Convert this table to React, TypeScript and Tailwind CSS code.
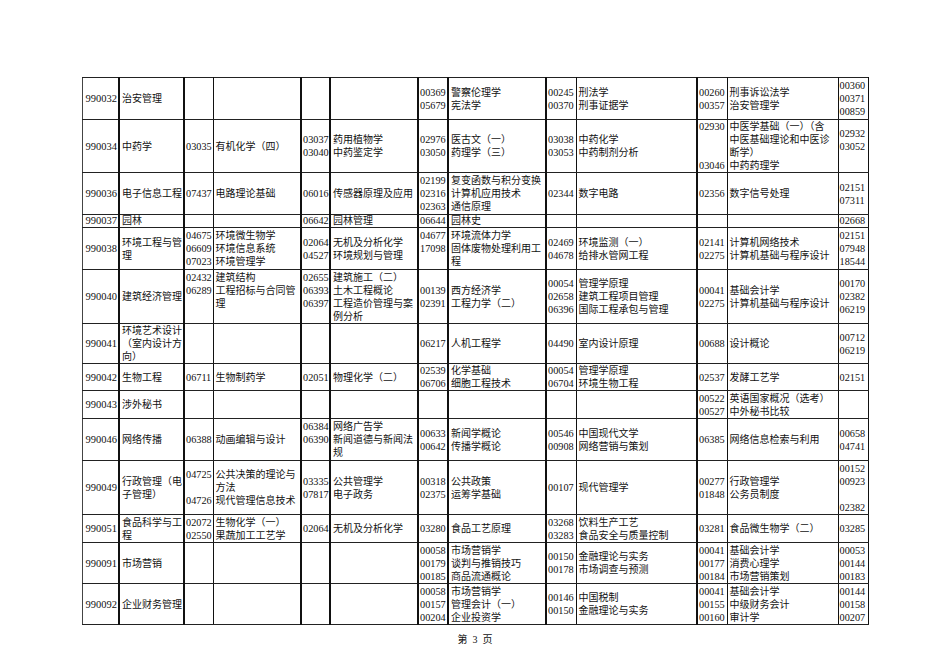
import React from 'react';

type Lines = string[];
type Pair = [Lines, Lines];
type Row = { h: number; id: string; name: Lines; pairs: Pair[]; last: Lines };

const E: Pair = [[], []];

const rows: Row[] = [
  {
    h: 42, id: '990032', name: ['治安管理'],
    pairs: [E, E,
      [['00369', '05679'], ['警察伦理学', '宪法学']],
      [['00245', '00370'], ['刑法学', '刑事证据学']],
      [['00260', '00357'], ['刑事诉讼法学', '治安管理学']]],
    last: ['00360', '00371', '00859'],
  },
  {
    h: 53, id: '990034', name: ['中药学'],
    pairs: [
      [['03035'], ['有机化学（四）']],
      [['03037', '03040'], ['药用植物学', '中药鉴定学']],
      [['02976', '03050'], ['医古文（一）', '药理学（三）']],
      [['03038', '03053'], ['中药化学', '中药制剂分析']],
      [['02930', '', '', '03046'], ['中医学基础（一）（含', '中医基础理论和中医诊', '断学）', '中药药理学']]],
    last: ['02932', '03052', ''],
  },
  {
    h: 42, id: '990036', name: ['电子信息工程'],
    pairs: [
      [['07437'], ['电路理论基础']],
      [['06016'], ['传感器原理及应用']],
      [['02199', '02316', '02363'], ['复变函数与积分变换', '计算机应用技术', '通信原理']],
      [['02344'], ['数字电路']],
      [['02356'], ['数字信号处理']]],
    last: ['02151', '07311'],
  },
  {
    h: 13, id: '990037', name: ['园林'],
    pairs: [E,
      [['06642'], ['园林管理']],
      [['06644'], ['园林史']],
      E, E],
    last: ['02668'],
  },
  {
    h: 42, id: '990038', name: ['环境工程与管', '理'],
    pairs: [
      [['04675', '06609', '07023'], ['环境微生物学', '环境信息系统', '环境管理学']],
      [['02064', '04527'], ['无机及分析化学', '环境规划与管理']],
      [['04677', '17098', ''], ['环境流体力学', '固体废物处理利用工', '程']],
      [['02469', '04678'], ['环境监测（一）', '给排水管网工程']],
      [['02141', '02275'], ['计算机网络技术', '计算机基础与程序设计']]],
    last: ['02151', '07948', '18544'],
  },
  {
    h: 54, id: '990040', name: ['建筑经济管理'],
    pairs: [
      [['02432', '06289', '', ''], ['建筑结构', '工程招标与合同管', '理', '']],
      [['02655', '06393', '06397', ''], ['建筑施工（二）', '土木工程概论', '工程造价管理与案', '例分析']],
      [['00139', '02391'], ['西方经济学', '工程力学（二）']],
      [['00054', '02658', '06396'], ['管理学原理', '建筑工程项目管理', '国际工程承包与管理']],
      [['00041', '02275'], ['基础会计学', '计算机基础与程序设计']]],
    last: ['00170', '02382', '06219'],
  },
  {
    h: 39, id: '990041', name: ['环境艺术设计', '（室内设计方', '向）'],
    pairs: [E, E,
      [['06217'], ['人机工程学']],
      [['04490'], ['室内设计原理']],
      [['00688'], ['设计概论']]],
    last: ['00712', '06219'],
  },
  {
    h: 26, id: '990042', name: ['生物工程'],
    pairs: [
      [['06711'], ['生物制药学']],
      [['02051'], ['物理化学（二）']],
      [['02539', '06706'], ['化学基础', '细胞工程技术']],
      [['00054', '06704'], ['管理学原理', '环境生物工程']],
      [['02537'], ['发酵工艺学']]],
    last: ['02151'],
  },
  {
    h: 28, id: '990043', name: ['涉外秘书'],
    pairs: [E, E, E, E,
      [['00522', '00527'], ['英语国家概况（选考）', '中外秘书比较']]],
    last: [],
  },
  {
    h: 42, id: '990046', name: ['网络传播'],
    pairs: [
      [['06388'], ['动画编辑与设计']],
      [['06384', '06390', ''], ['网络广告学', '新闻道德与新闻法', '规']],
      [['00633', '00642'], ['新闻学概论', '传播学概论']],
      [['00546', '00908'], ['中国现代文学', '网络营销与策划']],
      [['06385'], ['网络信息检索与利用']]],
    last: ['00658', '04741'],
  },
  {
    h: 54, id: '990049', name: ['行政管理（电', '子管理）'],
    pairs: [
      [['04725', '', '04726'], ['公共决策的理论与', '方法', '现代管理信息技术']],
      [['03335', '07817'], ['公共管理学', '电子政务']],
      [['00318', '02375'], ['公共政策', '运筹学基础']],
      [['00107'], ['现代管理学']],
      [['00277', '01848'], ['行政管理学', '公务员制度']]],
    last: ['00152', '00923', '', '02382'],
  },
  {
    h: 28, id: '990051', name: ['食品科学与工', '程'],
    pairs: [
      [['02072', '02550'], ['生物化学（一）', '果蔬加工工艺学']],
      [['02064'], ['无机及分析化学']],
      [['03280'], ['食品工艺原理']],
      [['03268', '03283'], ['饮料生产工艺', '食品安全与质量控制']],
      [['03281'], ['食品微生物学（二）']]],
    last: ['03285'],
  },
  {
    h: 41, id: '990091', name: ['市场营销'],
    pairs: [E, E,
      [['00058', '00179', '00185'], ['市场营销学', '谈判与推销技巧', '商品流通概论']],
      [['00150', '00178'], ['金融理论与实务', '市场调查与预测']],
      [['00041', '00177', '00184'], ['基础会计学', '消费心理学', '市场营销策划']]],
    last: ['00053', '00144', '00183'],
  },
  {
    h: 41, id: '990092', name: ['企业财务管理'],
    pairs: [E, E,
      [['00058', '00157', '00204'], ['市场营销学', '管理会计（一）', '企业投资学']],
      [['00146', '00150'], ['中国税制', '金融理论与实务']],
      [['00041', '00155', '00160'], ['基础会计学', '中级财务会计', '审计学']]],
    last: ['00144', '00158', '00207'],
  },
];

const widths = [37, 65, 29, 88, 29, 88, 30, 98, 30, 121, 30, 111, 30];

// right border per column: thick where the scan shows heavier rules
const rightCls = [
  'border-r-2', 'border-r-2', 'border-r', 'border-r-2', 'border-r-2', 'border-r-2', 'border-r-2',
  'border-r-2', 'border-r', 'border-r-2', 'border-r', 'border-r', 'border-r',
];

function Cell({ lines, col, tight }: { lines: Lines; col: number; tight?: boolean }) {
  let size = 'text-[10px] pl-[2px]';
  if (col === 0) size = 'text-[10.5px] pl-[3px] border-l border-l-[#444]';
  else if (col % 2 === 0) size = 'text-[10.25px] pl-[1px]';
  return (
    <td className={`p-0 align-middle border-y border-y-[#222] border-r-[#111] ${rightCls[col]} ${size}`}>
      {lines.map((l, i) => (
        <div key={i} className={`whitespace-nowrap ${tight ? 'leading-[12px]' : 'leading-[13px]'}`}>
          {l || '\u00a0'}
        </div>
      ))}
    </td>
  );
}

export default function App() {
  return (
    <div className="min-h-[672px] bg-white text-[#111] font-['Liberation_Serif','Noto_Sans_CJK_SC',serif] text-[10px]">
      <div className="pt-[77px] flex flex-col items-center">
        <table className="border-collapse table-fixed w-[786px]">
          <colgroup>
            {widths.map((w, i) => (
              <col key={i} style={{ width: w }} />
            ))}
          </colgroup>
          <tbody>
            {rows.map(r => {
              const tight = r.h < 20;
              return (
                <tr key={r.id} style={{ height: r.h }}>
                  <Cell lines={[r.id]} col={0} tight={tight} />
                  <Cell lines={r.name} col={1} tight={tight} />
                  {r.pairs.map((p, i) => (
                    <React.Fragment key={i}>
                      <Cell lines={p[0]} col={2 + i * 2} tight={tight} />
                      <Cell lines={p[1]} col={3 + i * 2} tight={tight} />
                    </React.Fragment>
                  ))}
                  <Cell lines={r.last} col={12} tight={tight} />
                </tr>
              );
            })}
          </tbody>
        </table>
        <div className="mt-[8px] flex gap-[5px] text-[10px] leading-[13px]">
          <span>第</span>
          <span>3</span>
          <span>页</span>
        </div>
      </div>
    </div>
  );
}
